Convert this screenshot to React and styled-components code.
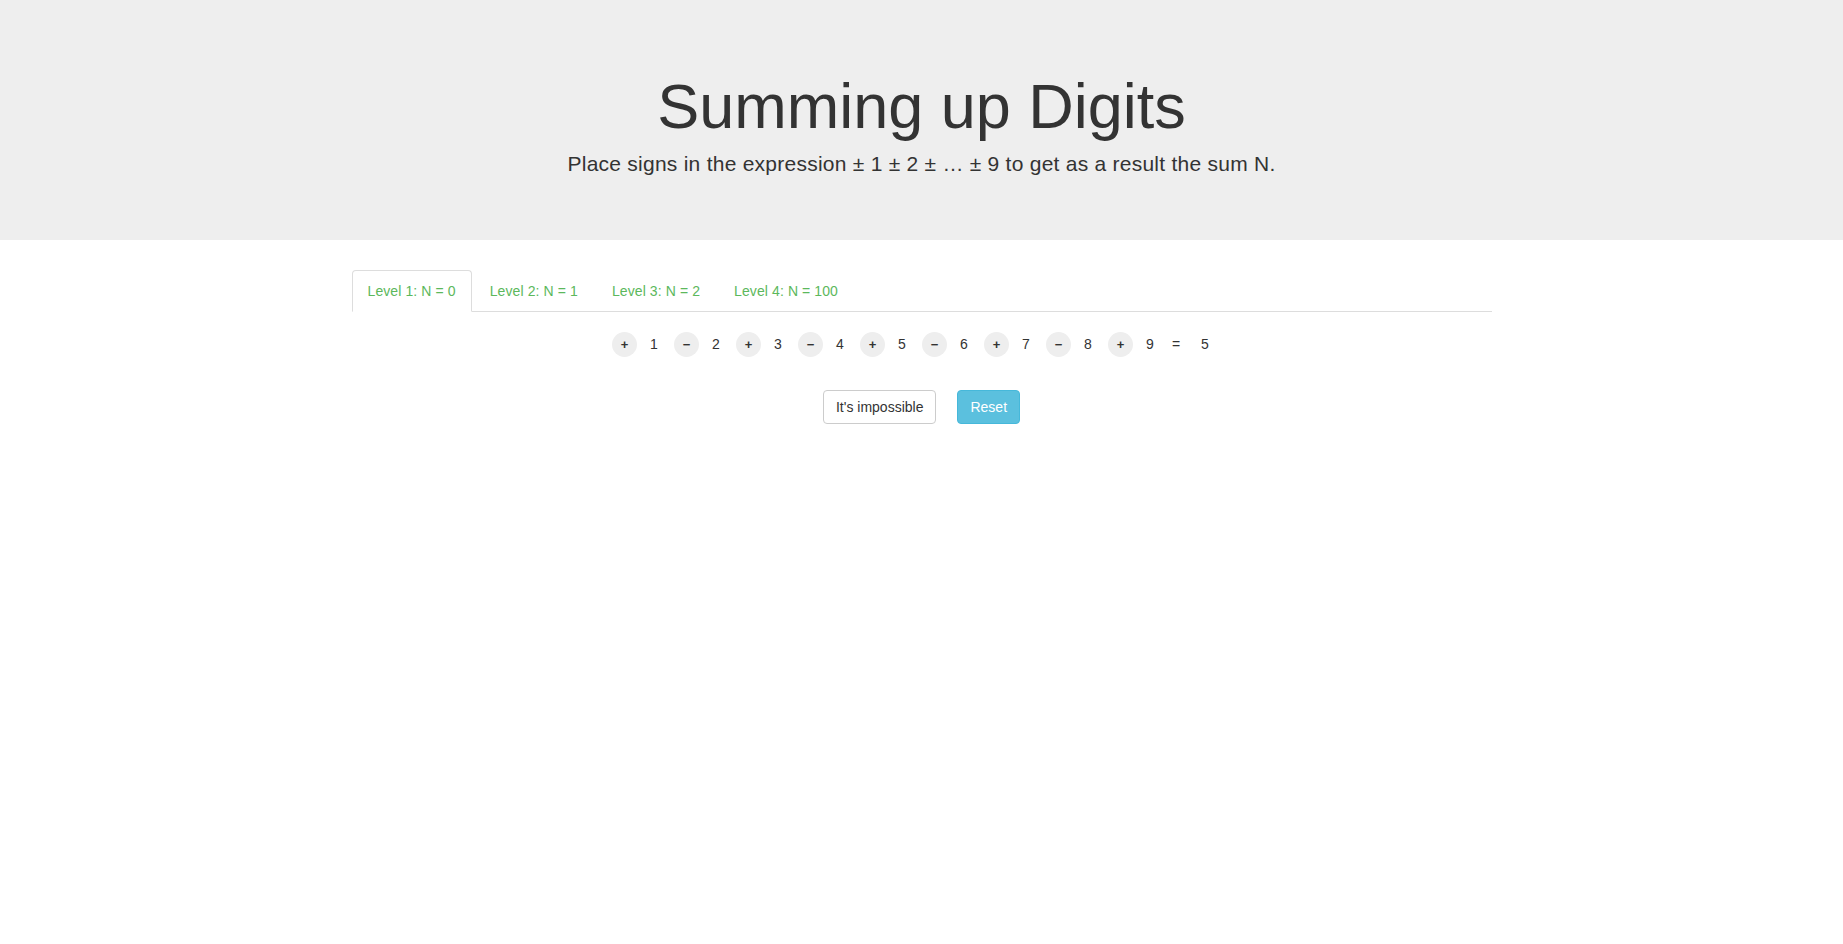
import React from 'react';
import styled, { createGlobalStyle } from 'styled-components';

const GlobalStyle = createGlobalStyle`
  body {
    margin: 0;
    font-family: 'Liberation Sans', Arial, sans-serif;
    font-size: 14px;
    line-height: 1.42857143;
    color: #333;
    background: #fff;
  }
`;

const Jumbotron = styled.header`
  background: #eee;
  padding: 52px 0 48px;
  margin-bottom: 30px;
  text-align: center;
`;

const Title = styled.h1`
  font-size: 63px;
  font-weight: 500;
  line-height: 1.1;
  margin: 20px 0 8px;
  color: #333;
`;

const Lead = styled.p`
  font-size: 21px;
  font-weight: 200;
  letter-spacing: 0.25px;
  margin: 0 0 13px;
`;

const Container = styled.main`
  width: 1140px;
  padding: 0 15px;
  margin: 0 auto;
`;

const Tabs = styled.ul`
  display: flex;
  list-style: none;
  margin: 0;
  padding: 0;
  border-bottom: 1px solid #ddd;
`;

const Tab = styled.li`
  margin-bottom: -1px;
`;

const TabLink = styled.a`
  display: block;
  padding: 10px 15px;
  margin-right: 2px;
  line-height: 20px;
  letter-spacing: 0.1px;
  color: #5cb85c;
  text-decoration: none;
  cursor: pointer;
  border: 1px solid transparent;
  border-radius: 4px 4px 0 0;
  ${p => p.$active && `
    background: #fff;
    border-color: #ddd #ddd transparent;
  `}
`;

const Expression = styled.div`
  display: flex;
  justify-content: center;
  align-items: center;
  padding-top: 20px;
  height: 25px;
`;

const SignButton = styled.button`
  width: 25px;
  height: 25px;
  padding: 0;
  border: none;
  border-radius: 50%;
  background: #eee;
  color: #333;
  font-family: inherit;
  font-size: 13px;
  font-weight: bold;
  line-height: 25px;
  cursor: pointer;
`;

const Cell = styled.span`
  width: ${p => p.$width}px;
  padding-left: ${p => p.$pad}px;
  box-sizing: border-box;
  line-height: 25px;
`;

const Actions = styled.div`
  display: flex;
  justify-content: center;
  gap: 21px;
  margin-top: 33px;
`;

const Button = styled.button`
  padding: 6px 12px;
  font-family: inherit;
  font-size: 14px;
  line-height: 20px;
  border-radius: 4px;
  border: 1px solid ${p => (p.$info ? '#46b8da' : '#ccc')};
  background: ${p => (p.$info ? '#5bc0de' : '#fff')};
  color: ${p => (p.$info ? '#fff' : '#333')};
  cursor: pointer;
`;

const levels = ['Level 1: N = 0', 'Level 2: N = 1', 'Level 3: N = 2', 'Level 4: N = 100'];
const signs = ['+', '−', '+', '−', '+', '−', '+', '−', '+'];

export default function App() {
  return (
    <>
      <GlobalStyle />
      <Jumbotron>
        <Title>Summing up Digits</Title>
        <Lead>Place signs in the expression ± 1 ± 2 ± … ± 9 to get as a result the sum N.</Lead>
      </Jumbotron>
      <Container>
        <Tabs>
          {levels.map((l, i) => (
            <Tab key={l}>
              <TabLink $active={i === 0}>{l}</TabLink>
            </Tab>
          ))}
        </Tabs>
        <Expression>
          {signs.map((s, i) => (
            <React.Fragment key={i}>
              <SignButton>{s}</SignButton>
              <Cell $width={37} $pad={13}>{i + 1}</Cell>
            </React.Fragment>
          ))}
          <Cell $width={31} $pad={2}>=</Cell>
          <Cell $width={30} $pad={0}>5</Cell>
        </Expression>
        <Actions>
          <Button>It's impossible</Button>
          <Button $info>Reset</Button>
        </Actions>
      </Container>
    </>
  );
}
